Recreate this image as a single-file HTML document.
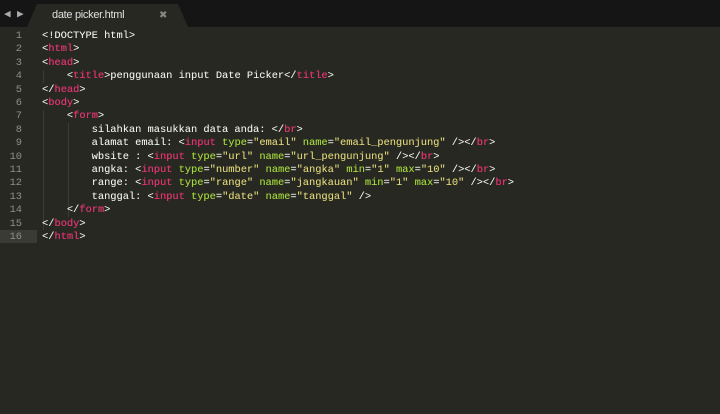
<!DOCTYPE html>
<html><head><style>
body{margin:0;width:720px;height:414px;background:#272822;overflow:hidden;font-family:"Liberation Mono",monospace;}
.bar{position:absolute;left:0;top:0;width:720px;height:27px;background:#151515;}
.tab{position:absolute;left:27px;top:4px;width:161px;height:23px;background:#272822;clip-path:polygon(10px 0,151px 0,161px 100%,0 100%);}
.tab span{position:absolute;left:25px;top:5px;font:11px "Liberation Sans",sans-serif;color:#e0e0e0;letter-spacing:-0.3px}
.x{position:absolute;left:159px;top:10px;color:#888;font:10px "Liberation Sans",sans-serif}
.arr{position:absolute;top:7px;color:#aaa;font-size:11px}
.code{position:absolute;left:0;top:30px;font-size:10.35px;line-height:13.4px;white-space:pre;color:#f8f8f2;text-shadow:0.2px 0 0 rgba(255,255,255,0.3)}
.ln{display:inline-block;width:22px;text-align:right;color:#8f908a;margin-right:20px;text-shadow:none}
.hl{background:#3a3b35;display:inline-block;width:37px;position:absolute;left:0;}
.t{color:#f92672}.a{color:#a6e22e}.s{color:#e6db74}
.g{position:absolute;width:1px;background:#3b3c36}
</style></head><body>
<div class="bar"></div>
<div class="arr" style="left:4px">&#9664;</div><div class="arr" style="left:17px">&#9654;</div>
<div class="tab"><span>date picker.html</span></div>
<div class="x">&#10006;</div>
<div class="hl" style="top:230px;height:13.4px"></div>
<div class="g" style="left:43px;top:70px;height:13px"></div>
<div class="g" style="left:43px;top:110px;height:120px"></div>
<div class="g" style="left:68px;top:123px;height:94px"></div>
<div class="code"><span class="ln">1</span>&lt;!DOCTYPE html&gt;
<span class="ln">2</span>&lt;<span class="t">html</span>&gt;
<span class="ln">3</span>&lt;<span class="t">head</span>&gt;
<span class="ln">4</span>    &lt;<span class="t">title</span>&gt;penggunaan input Date Picker&lt;/<span class="t">title</span>&gt;
<span class="ln">5</span>&lt;/<span class="t">head</span>&gt;
<span class="ln">6</span>&lt;<span class="t">body</span>&gt;
<span class="ln">7</span>    &lt;<span class="t">form</span>&gt;
<span class="ln">8</span>        silahkan masukkan data anda: &lt;/<span class="t">br</span>&gt;
<span class="ln">9</span>        alamat email: &lt;<span class="t">input</span> <span class="a">type</span>=<span class="s">"email"</span> <span class="a">name</span>=<span class="s">"email_pengunjung"</span> /&gt;&lt;/<span class="t">br</span>&gt;
<span class="ln">10</span>        wbsite : &lt;<span class="t">input</span> <span class="a">type</span>=<span class="s">"url"</span> <span class="a">name</span>=<span class="s">"url_pengunjung"</span> /&gt;&lt;/<span class="t">br</span>&gt;
<span class="ln">11</span>        angka: &lt;<span class="t">input</span> <span class="a">type</span>=<span class="s">"number"</span> <span class="a">name</span>=<span class="s">"angka"</span> <span class="a">min</span>=<span class="s">"1"</span> <span class="a">max</span>=<span class="s">"10"</span> /&gt;&lt;/<span class="t">br</span>&gt;
<span class="ln">12</span>        range: &lt;<span class="t">input</span> <span class="a">type</span>=<span class="s">"range"</span> <span class="a">name</span>=<span class="s">"jangkauan"</span> <span class="a">min</span>=<span class="s">"1"</span> <span class="a">max</span>=<span class="s">"10"</span> /&gt;&lt;/<span class="t">br</span>&gt;
<span class="ln">13</span>        tanggal: &lt;<span class="t">input</span> <span class="a">type</span>=<span class="s">"date"</span> <span class="a">name</span>=<span class="s">"tanggal"</span> /&gt;
<span class="ln">14</span>    &lt;/<span class="t">form</span>&gt;
<span class="ln">15</span>&lt;/<span class="t">body</span>&gt;
<span class="ln">16</span>&lt;/<span class="t">html</span>&gt;</div>
</body></html>
